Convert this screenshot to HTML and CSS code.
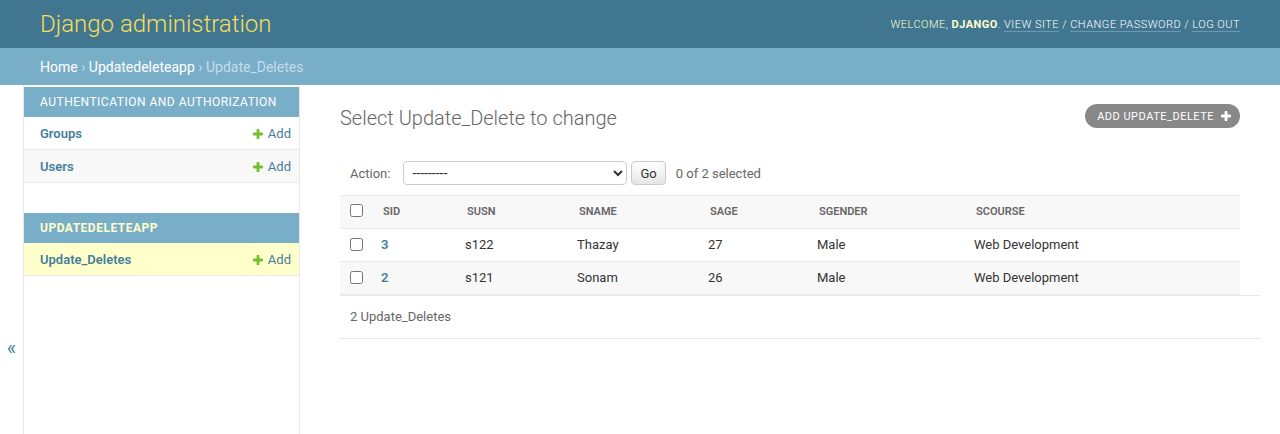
FILE: index.html
```html
<!DOCTYPE html>
<html lang="en">
<head>
<meta charset="utf-8">
<title>Select Update_Delete to change | Django site admin</title>
<link rel="stylesheet" href="styles.css">
</head>
<body>
<div class="container">
  <header class="header">
    <h1 class="branding">Django administration</h1>
    <div class="user-tools">
      Welcome, <strong>django</strong>.
      <a href="#">View site</a> /
      <a href="#">Change password</a> /
      <a href="#">Log out</a>
    </div>
  </header>
  <div class="breadcrumbs">
    <a href="#">Home</a> › <a href="#">Updatedeleteapp</a> › Update_Deletes
  </div>
  <div class="main">
    <button class="toggle-nav" type="button" aria-label="Toggle navigation">«</button>
    <nav class="nav-sidebar">
      <table class="module">
        <caption>Authentication and Authorization</caption>
        <tbody>
          <tr class="row-odd">
            <th class="model"><a href="#">Groups</a></th>
            <td class="add-cell"><a href="#" class="addlink"><svg class="plus" viewBox="0 0 10 10" width="10" height="10"><path d="M3.6 0.8 Q3.6 0 4.4 0 H5.6 Q6.4 0 6.4 0.8 V3.6 H9.2 Q10 3.6 10 4.4 V5.6 Q10 6.4 9.2 6.4 H6.4 V9.2 Q6.4 10 5.6 10 H4.4 Q3.6 10 3.6 9.2 V6.4 H0.8 Q0 6.4 0 5.6 V4.4 Q0 3.6 0.8 3.6 H3.6 Z" fill="#70bf2b"/></svg>Add</a></td>
          </tr>
          <tr class="row-even">
            <th class="model"><a href="#">Users</a></th>
            <td class="add-cell"><a href="#" class="addlink"><svg class="plus" viewBox="0 0 10 10" width="10" height="10"><path d="M3.6 0.8 Q3.6 0 4.4 0 H5.6 Q6.4 0 6.4 0.8 V3.6 H9.2 Q10 3.6 10 4.4 V5.6 Q10 6.4 9.2 6.4 H6.4 V9.2 Q6.4 10 5.6 10 H4.4 Q3.6 10 3.6 9.2 V6.4 H0.8 Q0 6.4 0 5.6 V4.4 Q0 3.6 0.8 3.6 H3.6 Z" fill="#70bf2b"/></svg>Add</a></td>
          </tr>
        </tbody>
      </table>
      <table class="module current-app">
        <caption>Updatedeleteapp</caption>
        <tbody>
          <tr class="current-model">
            <th class="model"><a href="#">Update_Deletes</a></th>
            <td class="add-cell"><a href="#" class="addlink"><svg class="plus" viewBox="0 0 10 10" width="10" height="10"><path d="M3.6 0.8 Q3.6 0 4.4 0 H5.6 Q6.4 0 6.4 0.8 V3.6 H9.2 Q10 3.6 10 4.4 V5.6 Q10 6.4 9.2 6.4 H6.4 V9.2 Q6.4 10 5.6 10 H4.4 Q3.6 10 3.6 9.2 V6.4 H0.8 Q0 6.4 0 5.6 V4.4 Q0 3.6 0.8 3.6 H3.6 Z" fill="#70bf2b"/></svg>Add</a></td>
          </tr>
        </tbody>
      </table>
    </nav>
    <div class="content">
      <div class="content-head">
        <h1 class="title">Select Update_Delete to change</h1>
        <a href="#" class="object-tool">Add Update_Delete<svg class="tool-plus" viewBox="0 0 10 10" width="10" height="10"><path d="M3.6 0.8 Q3.6 0 4.4 0 H5.6 Q6.4 0 6.4 0.8 V3.6 H9.2 Q10 3.6 10 4.4 V5.6 Q10 6.4 9.2 6.4 H6.4 V9.2 Q6.4 10 5.6 10 H4.4 Q3.6 10 3.6 9.2 V6.4 H0.8 Q0 6.4 0 5.6 V4.4 Q0 3.6 0.8 3.6 H3.6 Z" fill="#ffffff"/></svg></a>
      </div>
      <div class="changelist">
        <div class="actions">
          <label class="action-label">Action:</label>
          <select class="action-select">
            <option>---------</option>
            <option>Delete selected update_deletes</option>
          </select>
          <button class="go-button" type="button">Go</button>
          <span class="action-counter">0 of 2 selected</span>
        </div>
        <table class="results">
          <thead>
            <tr>
              <th class="col-check"><span class="th-text"><input type="checkbox"></span></th>
              <th class="col-sid"><span class="th-text">SID</span></th>
              <th class="col-susn"><span class="th-text">SUSN</span></th>
              <th class="col-sname"><span class="th-text">SNAME</span></th>
              <th class="col-sage"><span class="th-text">SAGE</span></th>
              <th class="col-sgender"><span class="th-text">SGENDER</span></th>
              <th class="col-scourse"><span class="th-text">SCOURSE</span></th>
            </tr>
          </thead>
          <tbody>
            <tr class="row-odd">
              <td class="cell-check"><input type="checkbox"></td>
              <th class="cell-link"><a href="#">3</a></th>
              <td>s122</td>
              <td>Thazay</td>
              <td>27</td>
              <td>Male</td>
              <td>Web Development</td>
            </tr>
            <tr class="row-even">
              <td class="cell-check"><input type="checkbox"></td>
              <th class="cell-link"><a href="#">2</a></th>
              <td>s121</td>
              <td>Sonam</td>
              <td>26</td>
              <td>Male</td>
              <td>Web Development</td>
            </tr>
          </tbody>
        </table>
        <p class="paginator">2 Update_Deletes</p>
      </div>
    </div>
  </div>
</div>
</body>
</html>
```
FILE: styles.css
```css
html, body {
  margin: 0;
  padding: 0;
}
body {
  font-family: Roboto, "Liberation Sans", Arial, sans-serif;
  font-size: 14px;
  color: #333;
  background: #fff;
}
a {
  color: #447e9b;
  text-decoration: none;
}
.container {
  display: flex;
  flex-direction: column;
  min-height: 100vh;
}
.header {
  display: flex;
  justify-content: space-between;
  align-items: center;
  padding: 10px 40px;
  background: #417690;
  color: #ffc;
}
.branding {
  margin: 0 20px 0 0;
  padding: 0;
  font-weight: 300;
  font-size: 24px;
  color: #f5dd5d;
}
.user-tools {
  font-weight: 300;
  font-size: 11px;
  letter-spacing: 0.48px;
  text-transform: uppercase;
  text-align: right;
  color: #ffc;
}
.user-tools strong {
  font-weight: 700;
}
.user-tools a {
  color: #fff;
  border-bottom: 1px solid rgba(255, 255, 255, 0.25);
}
.breadcrumbs {
  background: #79aec8;
  padding: 11px 40px 10px;
  line-height: 16px;
  font-size: 14px;
  color: #c4dce8;
}
.breadcrumbs a {
  color: #fff;
}
.main {
  display: flex;
  flex: 1 0 auto;
}
.toggle-nav {
  box-sizing: content-box;
  display: flex;
  align-items: flex-start;
  justify-content: center;
  flex: 0 0 23px;
  width: 23px;
  border: 0;
  border-right: 1px solid #e8e8e8;
  background: #fff;
  font-family: Roboto, "Liberation Sans", Arial, sans-serif;
  font-size: 20px;
  color: #447e9b;
  padding: 251px 0 0;
  margin: 0;
}
.nav-sidebar {
  flex: 0 0 275px;
  border-top: 2px solid transparent;
  border-right: 1px solid #e8e8e8;
  background: #fff;
}
.module {
  width: 100%;
  border-collapse: collapse;
  margin-bottom: 30px;
}
.module caption {
  margin: 0;
  padding: 8px 8px 8px 16px;
  font-weight: 400;
  font-size: 12px;
  letter-spacing: 0.5px;
  text-transform: uppercase;
  text-align: left;
  background: #79aec8;
  color: #fff;
}
.current-app caption {
  color: #ffc;
  font-weight: 700;
}
.module th, .module td {
  font-size: 13px;
  line-height: 16px;
  height: 16px;
  padding: 9px 8px 7px;
  border-bottom: 1px solid #e8e8e8;
  vertical-align: top;
  text-align: left;
}
.module th.model {
  width: 100%;
  padding-left: 16px;
  font-weight: 600;
}
.module td.add-cell {
  white-space: nowrap;
}
.addlink {
  display: inline-flex;
  align-items: center;
  height: 16px;
  vertical-align: top;
}
.plus {
  margin-right: 5px;
}
.row-odd {
  background: #fff;
}
.row-even {
  background: #f8f8f8;
}
.current-model {
  background: #ffc;
}
.content {
  flex: 1 1 auto;
  min-width: 0;
  padding: 21px 40px 20px;
}
.content-head {
  display: flex;
  justify-content: space-between;
  align-items: flex-start;
}
.title {
  margin: 0 0 21px;
  font-weight: 300;
  font-size: 20px;
  color: #666;
}
.object-tool {
  display: flex;
  align-items: center;
  margin-top: -2px;
  height: 24px;
  padding: 0 9px 0 12px;
  background: #888;
  color: #fff;
  border-radius: 15px;
  font-size: 11px;
  font-weight: 400;
  letter-spacing: 0.5px;
  text-transform: uppercase;
  box-sizing: border-box;
}
.tool-plus {
  margin-left: 7px;
}
.actions {
  display: flex;
  align-items: center;
  padding: 10px;
  height: 24px;
  color: #666;
}
.action-label {
  font-size: 13px;
}
.action-select {
  margin: 0 0 0 13px;
  width: 224px;
  height: 24px;
  padding: 0 0 0 4px;
  border: 1px solid #ccc;
  border-radius: 4px;
  background: #fff;
  color: #333;
  font-family: Roboto, "Liberation Sans", Arial, sans-serif;
  font-size: 14px;
}
.go-button {
  margin: 0 0 0 4px;
  height: 24px;
  padding: 4px 8px;
  line-height: 1;
  font-family: Roboto, "Liberation Sans", Arial, sans-serif;
  font-size: 13px;
  border: 1px solid #ccc;
  border-radius: 4px;
  background: #fff;
  box-shadow: 0 -15px 20px -10px rgba(0, 0, 0, 0.15) inset;
  color: #333;
}
.action-counter {
  font-size: 13px;
  margin-left: 10px;
}
.results {
  width: 100%;
  border-collapse: collapse;
  table-layout: fixed;
}
.results thead th {
  padding: 0;
  font-size: 11px;
  line-height: 16px;
  font-weight: 600;
  color: #666;
  text-align: left;
  background: #f8f8f8;
  border-top: 1px solid #e8e8e8;
  border-bottom: 1px solid #e8e8e8;
  white-space: nowrap;
  vertical-align: middle;
}
.th-text {
  display: block;
  padding: 8px 10px;
}
.results thead th.col-check {
  text-align: center;
}
.col-check .th-text {
  padding: 8px 0;
}
.col-check { width: 33px; }
.col-sid { width: 84px; }
.col-susn { width: 112px; }
.col-sname { width: 131px; }
.col-sage { width: 109px; }
.col-sgender { width: 157px; }
.results input[type="checkbox"] {
  margin: 0;
  width: 13px;
  height: 13px;
  vertical-align: -2px;
}
.results tbody td, .results tbody th {
  font-size: 13px;
  line-height: 16px;
  padding: 8px;
  border-bottom: 1px solid #e8e8e8;
  vertical-align: top;
  text-align: left;
  color: #333;
}
.results tbody th.cell-link {
  font-weight: 600;
}
.results tbody td.cell-check {
  text-align: center;
  padding: 8px 0;
}
.paginator {
  margin: 0;
  width: 100%;
  padding: 10px;
  font-size: 13px;
  line-height: 22px;
  color: #666;
  border-top: 1px solid #e8e8e8;
  border-bottom: 1px solid #e8e8e8;
}
```
